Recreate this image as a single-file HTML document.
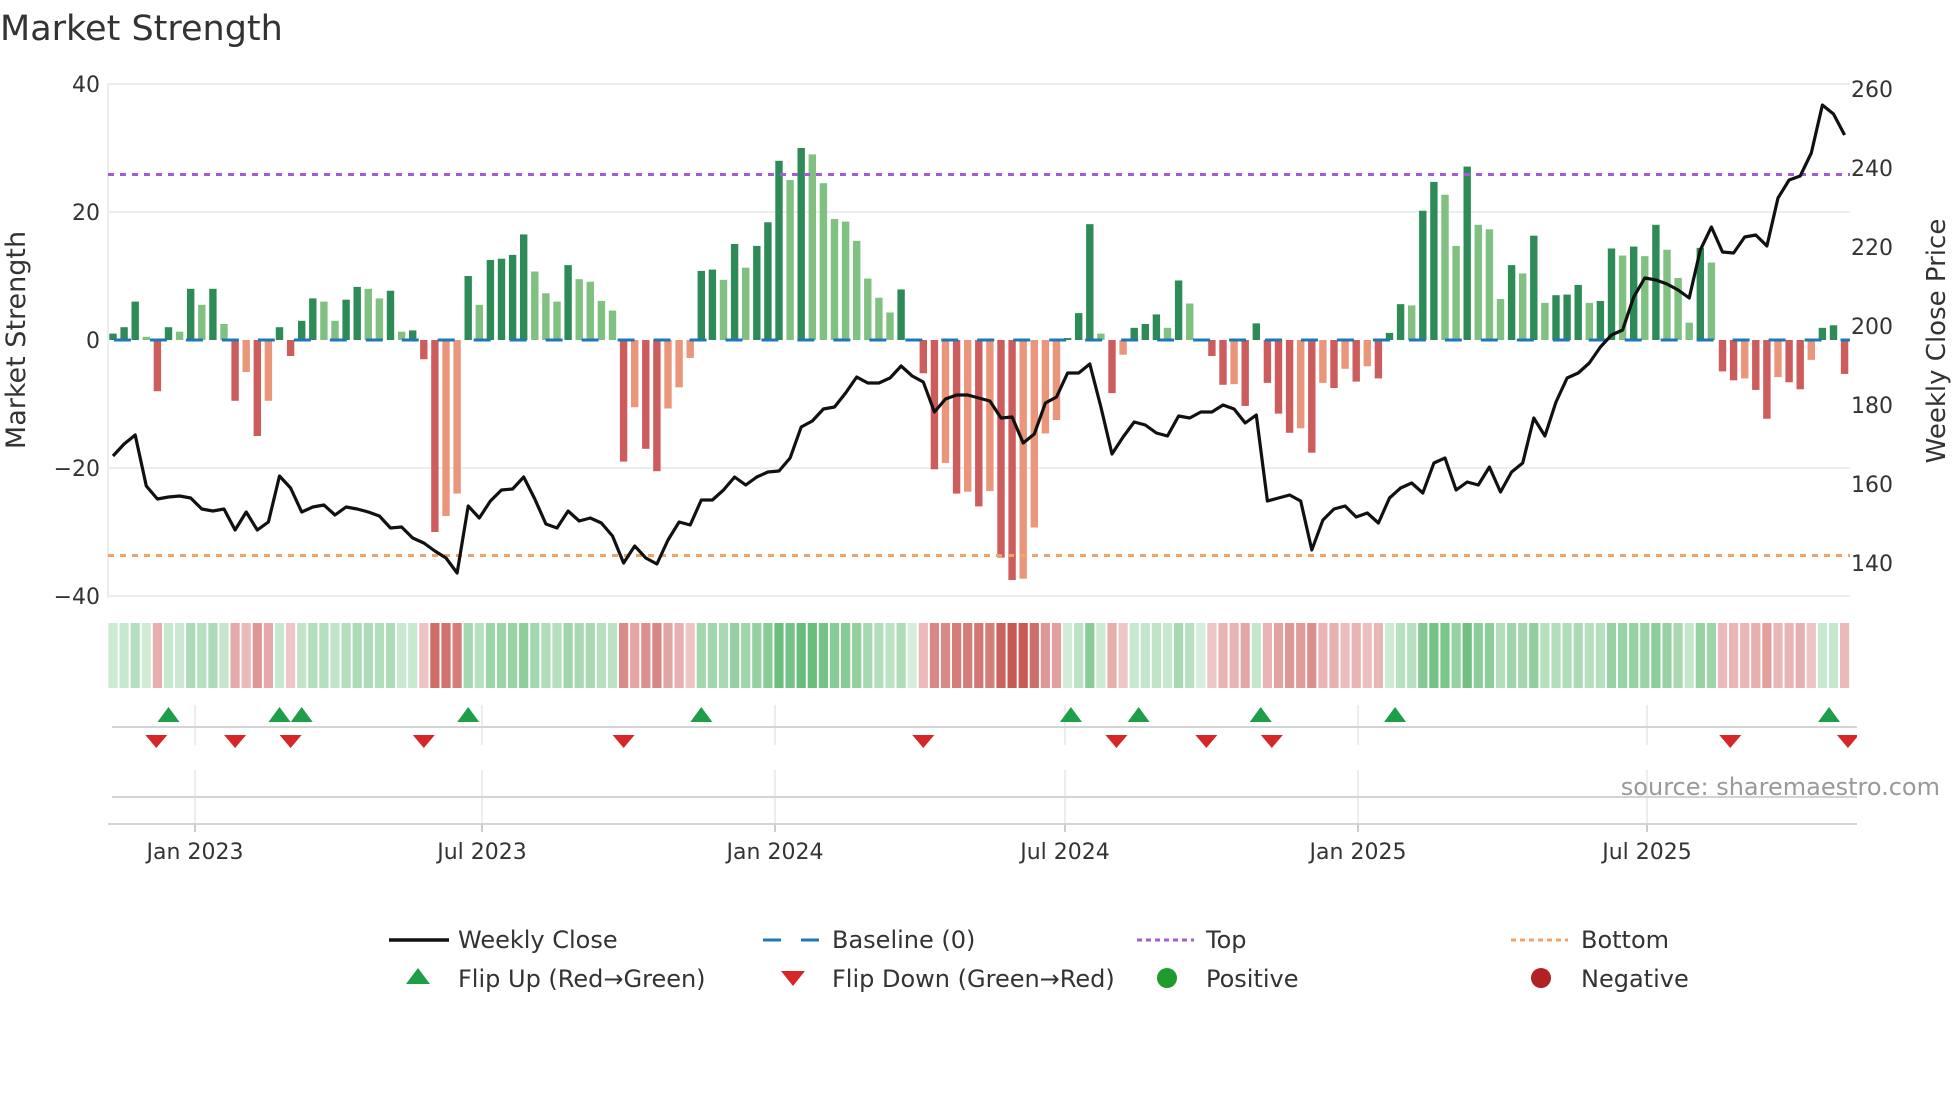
<!DOCTYPE html>
<html><head><meta charset="utf-8">
<style>
html,body{margin:0;padding:0;background:#fff;}
body{width:1960px;height:1102px;overflow:hidden;font-family:"DejaVu Sans","Liberation Sans",sans-serif;}
svg text{font-family:"DejaVu Sans","Liberation Sans",sans-serif;fill:#333;}
</style></head>
<body>
<svg id="s" width="1960" height="1102" xmlns="http://www.w3.org/2000/svg">
<text x="0" y="40" font-size="35">Market Strength</text>
<text x="100" y="92" font-size="22" text-anchor="end">40</text>
<text x="100" y="220" font-size="22" text-anchor="end">20</text>
<text x="100" y="348" font-size="22" text-anchor="end">0</text>
<text x="100" y="476" font-size="22" text-anchor="end">−20</text>
<text x="100" y="604" font-size="22" text-anchor="end">−40</text>
<g font-size="22">
<text x="1851" y="97">260</text>
<text x="1851" y="176">240</text>
<text x="1851" y="255">220</text>
<text x="1851" y="334">200</text>
<text x="1851" y="413">180</text>
<text x="1851" y="492">160</text>
<text x="1851" y="571">140</text>
</g>
<text transform="translate(25,340) rotate(-90)" font-size="27" text-anchor="middle">Market Strength</text>
<text transform="translate(1945,341) rotate(-90)" font-size="26" text-anchor="middle">Weekly Close Price</text>
<text x="1940" y="795" font-size="24" text-anchor="end" style="fill:#999">source: sharemaestro.com</text>
<g font-size="22" text-anchor="middle">
<text x="195" y="859">Jan 2023</text><text x="482" y="859">Jul 2023</text><text x="775" y="859">Jan 2024</text>
<text x="1065" y="859">Jul 2024</text><text x="1358" y="859">Jan 2025</text><text x="1647" y="859">Jul 2025</text>
</g>
<g font-size="24">
<line x1="389" y1="940" x2="449" y2="940" stroke="#111" stroke-width="3.5"/>
<text x="458" y="948">Weekly Close</text>
<line x1="763" y1="940" x2="819" y2="940" stroke="#1f77b4" stroke-width="3" stroke-dasharray="18 20"/>
<text x="832" y="948">Baseline (0)</text>
<line x1="1137" y1="940" x2="1194" y2="940" stroke="#9e5fd6" stroke-width="3" stroke-dasharray="5 4"/>
<text x="1206" y="948">Top</text>
<line x1="1511" y1="940" x2="1568" y2="940" stroke="#f0a46a" stroke-width="3" stroke-dasharray="5 4"/>
<text x="1581" y="948">Bottom</text>
<polygon points="406,984 430,984 418,968" fill="#1e9e48"/>
<text x="458" y="987">Flip Up (Red→Green)</text>
<polygon points="781,971 805,971 793,986" fill="#d62728"/>
<text x="832" y="987">Flip Down (Green→Red)</text>
<circle cx="1167" cy="978" r="10" fill="#1f9a2d"/>
<text x="1206" y="987">Positive</text>
<circle cx="1541" cy="978" r="10" fill="#b22222"/>
<text x="1581" y="987">Negative</text>
</g>
</svg>
<script>
var V=[1,2,6,0.5,-8,2,1.3,8,5.5,8,2.5,-9.5,-5,-15,-9.5,2,-2.5,3,6.5,6,3,6.3,8.3,8,6.5,7.7,1.3,1.5,-3,-30,-27.5,-24,10,5.5,12.5,12.7,13.3,16.5,10.7,7.3,6,11.7,9.5,9.1,6.1,4.6,-19,-10.5,-17,-20.5,-10.7,-7.4,-2.8,10.8,11,9.4,15,11.3,14.7,18.4,28,25,30,29,24.5,18.9,18.5,15.5,9.6,6.6,4.3,7.9,0,
-5.2,-20.2,-19.2,-24,-23.7,-26,-23.6,-34,-37.5,-37.3,-29.3,-14.6,-12.5,0.3,4.2,18.1,1,-8.3,-2.3,1.9,2.5,4,1.9,9.3,5.7,0,-2.5,-7,-6.9,-10.3,2.6,-6.7,-11.5,-14.5,-13.8,-17.6,-6.7,-7.5,-4.5,-6.5,-4.1,-6,1.1,5.6,
5.4,20.2,24.7,22.7,14.7,27.1,18,17.3,6.4,11.7,10.4,16.3,5.8,7,7.1,8.6,5.8,6.1,14.3,13.2,14.6,13.1,18,14.1,9.7,2.7,14.4,12.1,-4.9,-6.3,-6,-7.8,-12.3,-5.8,-6.6,-7.7,-3.1,1.9,2.3,-5.3];
var P=[456,444,435,486,499,497,496,498,509,511,509,530,512,530,522,476,488,512,507,505,515,507,509,512,516,528,527,538,543,551,558,573,506,518,501,490,489,477,499,524,528,511,521,518,523,536,563,546,558,564,540,522,525,500,500,490,477,485,477,472,471,458,427,421,409,407,393,377,383,383,378,366,376,
382,412,399,395,395,398,401,418,417,443,434,403,397,373,373,364,407,454,437,422,425,433,436,416,418,412,412,405,409,423,415,501,498,495,501,550,520,509,506,517,513,523,498,488,
483,493,463,458,490,482,485,467,492,472,463,418,436,402,378,373,363,347,335,330,297,278,280,284,290,298,250,227,252,253,237,235,246,198,180,176,153,105,114,135];
var X0=113,DX=11.1,Z=340,U=6.4;
var o='';
function X(i){return X0+i*DX;}
[84,212,468,596].forEach(function(y){o+='<line x1="108" y1="'+y+'" x2="1850" y2="'+y+'" stroke="#ebedf0" stroke-width="2"/>';});
o+='<line x1="108" y1="84" x2="108" y2="598" stroke="#ebedf0" stroke-width="2"/>';
function mix(a,b,t){var r='#';for(var k=0;k<3;k++){var c=Math.round(a[k]+(b[k]-a[k])*t);r+=(c<16?'0':'')+c.toString(16);}return r;}
for(var i=0;i<V.length;i++){var v=V[i],t=Math.pow(Math.min(1,Math.abs(v)/38),0.75);
var c=v>=0?mix([214,238,219],[82,178,102],t):mix([245,214,216],[198,88,82],t);
o+='<rect x="'+(X(i)-4.6)+'" y="623" width="9.2" height="65" fill="'+c+'"/>';}
for(var i=0;i<V.length;i++){var v=V[i];if(v==0)continue;var p=i>0?V[i-1]:0;var c;
if(v>0)c=(v>p||p<=0)?'#2e8b57':'#80c080';else c=(v<p||p>=0)?'#cd5c5c':'#e9967a';
var h=Math.abs(v)*U;o+='<rect x="'+(X(i)-3.7)+'" y="'+(v>0?Z-h:Z)+'" width="7.4" height="'+h+'" fill="'+c+'"/>';}
o+='<line x1="108" y1="'+Z+'" x2="1850" y2="'+Z+'" stroke="#1f77b4" stroke-width="3" stroke-dasharray="17 18.97" stroke-dashoffset="30"/>';
o+='<line x1="108" y1="174.5" x2="1850" y2="174.5" stroke="#9e5fd6" stroke-width="3" stroke-dasharray="6 6"/>';
o+='<line x1="108" y1="555.5" x2="1850" y2="555.5" stroke="#f0a46a" stroke-width="3" stroke-dasharray="6 6"/>';
var d='';for(var i=0;i<P.length;i++)d+=(i?'L':'M')+X(i).toFixed(1)+' '+P[i];
o+='<path d="'+d+'" fill="none" stroke="#111" stroke-width="3.2" stroke-linejoin="round"/>';
[195,482,775,1065,1358,1647].forEach(function(x){o+='<line x1="'+x+'" y1="705" x2="'+x+'" y2="745" stroke="#ebedf0" stroke-width="2"/><line x1="'+x+'" y1="770" x2="'+x+'" y2="823" stroke="#ebedf0" stroke-width="2"/><line x1="'+x+'" y1="823" x2="'+x+'" y2="832" stroke="#ccc" stroke-width="2"/>';});
o+='<line x1="112" y1="727" x2="1857" y2="727" stroke="#d4d4d4" stroke-width="2"/>';
o+='<line x1="112" y1="797" x2="1857" y2="797" stroke="#d4d4d4" stroke-width="2"/>';
o+='<line x1="108" y1="824" x2="1857" y2="824" stroke="#d4d4d4" stroke-width="2"/>';
o+='<defs><clipPath id="cp"><rect x="100" y="700" width="1757" height="60"/></clipPath></defs><g clip-path="url(#cp)">';
[5,15,17,32,53,86.3,92.4,103.4,115.5,154.6].forEach(function(i){var x=X(i);o+='<polygon points="'+(x-11)+',722 '+(x+11)+',722 '+x+',707" fill="#1e9e48"/>';});
[3.9,11,16,28,46,73,90.4,98.5,104.4,145.7,156.3].forEach(function(i){var x=X(i);o+='<polygon points="'+(x-11)+',735 '+(x+11)+',735 '+x+',748" fill="#d62728"/>';});
o+='</g>';
var s=document.getElementById('s');s.insertAdjacentHTML('afterbegin',o);
</script>
</body></html>
